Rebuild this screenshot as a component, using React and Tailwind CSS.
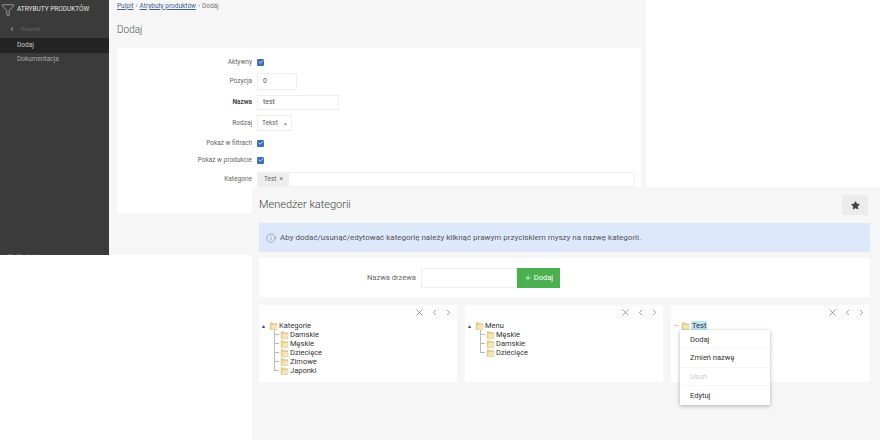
import { Check, ChevronLeft, ChevronRight, Filter, Info, Plus, Star, X } from 'lucide-react';

const font = { fontFamily: 'Roboto, "Liberation Sans", sans-serif' };

function FormRow({ label, bold, height, children }) {
  return (
    <div className={`flex items-center gap-[5px] ${height}`}>
      <div className={`w-[135px] pt-[2px] text-right text-[6.5px] ${bold ? 'font-bold text-[#444]' : 'text-[#666]'}`}>{label}</div>
      {children}
    </div>
  );
}

function Checkbox() {
  return (
    <span className="flex h-[7px] w-[7px] items-center justify-center rounded-[1px] bg-[#3a6fc4]">
      <Check size={6} strokeWidth={3} className="text-white" />
    </span>
  );
}

function BackWindow() {
  return (
    <div className="flex h-[255px] w-[646px] bg-[#f6f6f6]">
      <aside className="flex w-[109px] shrink-0 flex-col overflow-hidden bg-[#3b3b3b] text-[#c8c8c8]">
        <div className="flex h-[19px] items-center gap-[2px] pl-[1px]">
          <Filter size={14} strokeWidth={1} className="text-[#ddd]" />
          <span className="text-[6.5px] text-[#e2e2e2]">ATRYBUTY PRODUKTÓW</span>
        </div>
        <div className="flex h-[19px] items-center gap-[6px] pl-[9px] text-[6px] text-[#666]">
          <ChevronLeft size={6} strokeWidth={3} className="text-[#ccc]" />
          <span>Powrót</span>
        </div>
        <div className="flex h-[15px] items-center bg-[#242424] pl-[17px] text-[6.5px]">Dodaj</div>
        <div className="flex h-[14px] items-center pl-[17px] text-[6.5px] text-[#aaa]">Dokumentacja</div>
        <div className="mt-auto flex h-[2px] gap-[3px] pl-[7px] text-[6px] leading-[6px] text-[#bbb]">
          <span>▯▯</span>
          <span>Atrybuty</span>
        </div>
      </aside>
      <main className="flex min-w-0 flex-1 flex-col pl-[8px] pr-[5px]">
        <div className="flex h-[13px] items-center gap-[2px] text-[6.5px] text-[#777]">
          <span className="text-[#45618f] underline">Pulpit</span>
          <span>›</span>
          <span className="text-[#45618f] underline">Atrybuty produktów</span>
          <span>›</span>
          <span>Dodaj</span>
        </div>
        <h1 className="flex h-[32px] items-center text-[10px] font-light text-[#555]">Dodaj</h1>
        <section className="mt-[3px] h-[165px] bg-white pt-[6px]">
          <FormRow label="Aktywny" height="h-[16px]">
            <Checkbox />
          </FormRow>
          <FormRow label="Pozycja" height="h-[22px]">
            <div className="flex h-[17px] w-[40px] items-center rounded-[2px] border border-[#eee] pl-[5px] pt-[1px] text-[7px] text-[#555]">0</div>
          </FormRow>
          <FormRow label="Nazwa" bold height="h-[20px]">
            <div className="flex h-[15px] w-[82px] items-center border border-[#eee] pl-[5px] text-[7px] text-[#555]">test</div>
          </FormRow>
          <FormRow label="Rodzaj" height="h-[22px]">
            <div className="flex h-[16px] w-[35px] items-center justify-between border border-[#eee] px-[4px] pt-[1px] text-[6.5px] text-[#666]">
              <span>Tekst</span>
              <span className="text-[6px]">×</span>
            </div>
          </FormRow>
          <FormRow label="Pokaż w filtrach" height="h-[18px]">
            <Checkbox />
          </FormRow>
          <FormRow label="Pokaż w produkcie" height="h-[16px]">
            <Checkbox />
          </FormRow>
          <FormRow label="Kategorie" height="h-[22px]">
            <div className="flex h-[15px] w-[378px] border border-[#f0f0f0]">
              <div className="flex w-[31px] items-center justify-center gap-[3px] bg-[#eee] pt-[2px] text-[6.5px] text-[#666]">
                <span>Test</span>
                <span>×</span>
              </div>
            </div>
          </FormRow>
        </section>
      </main>
    </div>
  );
}

function Folder() {
  return (
    <svg width="9" height="9" viewBox="0 0 16 16" className="shrink-0">
      <path d="M2 3h4l2 2h6v10H2z" fill="#e4cd8e" stroke="#d8bf7c" strokeWidth="1" />
      <path d="M4 7h10v8H4z" fill="#f4e6b8" />
    </svg>
  );
}

function TreeNode({ name, last }) {
  return (
    <div className="relative flex h-[9px] items-center gap-[1px] pl-[18px]">
      <span className={`absolute left-[12px] top-0 w-0 border-l border-[#bbb] ${last ? 'h-[5px]' : 'h-[9px]'}`} />
      <span className="absolute left-[12px] top-[4px] w-[5px] border-t border-[#bbb]" />
      <Folder />
      <span>{name}</span>
    </div>
  );
}

function TreePanel({ root, items = [], width = 'w-[198px]', selected, children }) {
  return (
    <div className={`relative h-[77px] ${width} bg-white`}>
      <div className="flex h-[15px] items-center justify-end gap-[5px] bg-[#fdfdfd] pr-[4px] text-[#555]">
        <X size={11} strokeWidth={1.2} />
        <ChevronLeft size={9} strokeWidth={1.5} />
        <ChevronRight size={9} strokeWidth={1.5} />
      </div>
      <div className="pl-[3px] text-[7.5px] leading-[9px] text-[#333]">
        <div className="flex h-[10px] items-center gap-[1px]">
          <span className={`w-[6px] text-[6px] ${selected ? 'text-[#ccc]' : 'text-[#444]'}`}>{selected ? '⊢' : '▴'}</span>
          <Folder />
          <span className={selected ? 'bg-[#bde4f6] px-[1px]' : ''}>{root}</span>
        </div>
        {items.map((name, i) => (
          <TreeNode key={name} name={name} last={i === items.length - 1} />
        ))}
      </div>
      {children}
    </div>
  );
}

function ContextMenu() {
  return (
    <div className="absolute left-[9px] top-[25px] z-10 w-[90px] bg-white text-[7.5px] text-[#333] shadow-[0_1px_4px_rgba(0,0,0,0.3)]">
      <div className="flex h-[19px] items-center border-b border-[#f6f6f6] pl-[10px] pt-[1px]">Dodaj</div>
      <div className="flex h-[19px] items-center border-b border-[#f6f6f6] pl-[10px]">Zmień nazwę</div>
      <div className="flex h-[18px] items-center border-b border-[#f6f6f6] pl-[10px] text-[#ccc]">Usuń</div>
      <div className="flex h-[19px] items-center pl-[10px]">Edytuj</div>
    </div>
  );
}

function FrontWindow() {
  return (
    <div className="absolute left-[252px] top-[187px] flex h-[253px] w-[628px] flex-col bg-[#f6f6f6] pl-[7px] pr-[10px]">
      <div className="flex h-[36px] items-center justify-between pr-[2px]">
        <h2 className="text-[11px] font-light text-[#444]">Menedżer kategorii</h2>
        <button className="flex h-[20px] w-[26px] items-center justify-center bg-[#ececec] text-[#444]">
          <Star size={9} fill="currentColor" />
        </button>
      </div>
      <div className="flex h-[29px] items-center gap-[4px] bg-[#dde8fb] pl-[7px] text-[8px] text-[#555]">
        <Info size={10} strokeWidth={1} />
        <span>Aby dodać/usunąć/edytować kategorię należy kliknąć prawym przyciskiem myszy na nazwę kategorii.</span>
      </div>
      <div className="mt-[6px] flex h-[39px] items-center bg-white pl-[108px]">
        <span className="text-[7.5px] text-[#666]">Nazwa drzewa</span>
        <div className="ml-[5px] h-[20px] w-[96px] border border-[#eee] bg-white" />
        <button className="flex h-[20px] w-[43px] items-center justify-center gap-[2px] bg-[#4caf50] text-[7.5px] text-white">
          <Plus size={8} />
          Dodaj
        </button>
      </div>
      <div className="mt-[8px] flex gap-[8px]">
        <TreePanel root="Kategorie" items={['Damskie', 'Męskie', 'Dziecięce', 'Zimowe', 'Japonki']} />
        <TreePanel root="Menu" items={['Męskie', 'Damskie', 'Dziecięce']} />
        <TreePanel root="Test" selected width="w-[199px]">
          <ContextMenu />
        </TreePanel>
      </div>
    </div>
  );
}

export default function App() {
  return (
    <div className="relative h-[440px] w-[880px] overflow-hidden bg-white antialiased" style={font}>
      <BackWindow />
      <FrontWindow />
    </div>
  );
}
